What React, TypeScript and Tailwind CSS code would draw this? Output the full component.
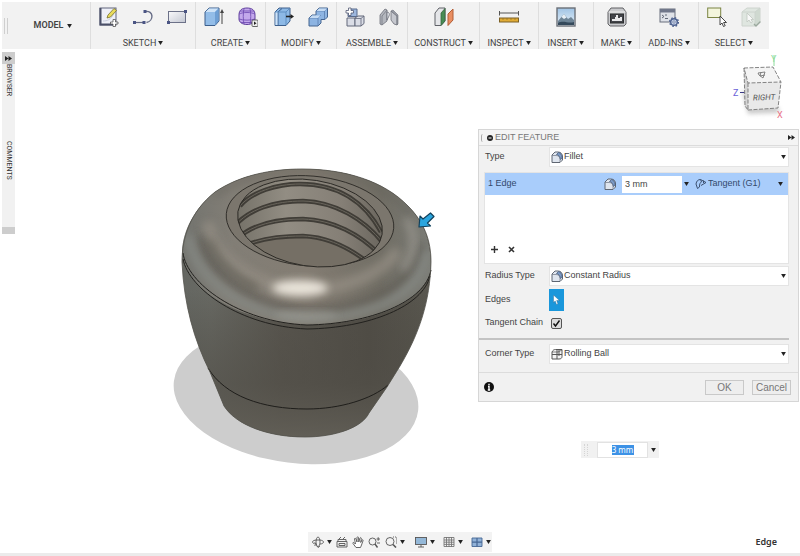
import React, { ReactNode } from "react";

const uiFont = "font-['Roboto','Liberation_Sans',Arial,sans-serif]";

function Caret({ small = false }: { small?: boolean }) {
  return (
    <svg
      viewBox="0 0 6 5"
      className={small ? "h-1 w-[5px] shrink-0" : "h-[5px] w-1.5 shrink-0"}
      aria-hidden="true"
    >
      <path d="M0 0H6L3 5Z" fill="#222" />
    </svg>
  );
}

function Icon({ children }: { children: ReactNode }) {
  return (
    <svg viewBox="0 0 20 20" className="size-5" fill="none" aria-hidden="true">
      {children}
    </svg>
  );
}

/* ---------- toolbar icons ---------- */

const SketchIcon = () => (
  <Icon>
    <rect x="1" y="1" width="16" height="17" fill="#eef0f8" stroke="#60657c" />
    <path d="M1.500 1V17.500H17" stroke="#4b5068" strokeWidth="2" />
    <path d="M4 14C8 14 12 13 15 6" stroke="#c9cede" />
    <path d="M8 11L9 8L15 1.500L17.500 3.500L11.500 10Z" fill="#e9dc5a" stroke="#77702f" strokeWidth=".8" />
    <path d="M14 12.500H16.500V15H19V17H16.500V19.500H14V17H11.500V15H14Z" fill="#fff" stroke="#555" strokeWidth=".8" />
  </Icon>
);
const LineIcon = () => (
  <Icon>
    <path d="M1.500 15.500H11" stroke="#666c86" strokeWidth="1.200" />
    <path d="M12 4.500C21 3 21 14 13.500 15.500" stroke="#666c86" strokeWidth="1.400" />
    <rect x="0" y="14" width="3" height="3" fill="#4b5584" />
    <rect x="9.500" y="14" width="3" height="3" fill="#4b5584" />
    <rect x="10.500" y="3" width="3" height="3" fill="#4b5584" />
  </Icon>
);
const RectIcon = () => (
  <Icon>
    <defs>
      <linearGradient id="rectFill" x1="0" y1="0" x2="1" y2="1">
        <stop offset="0" stopColor="#fafafc" />
        <stop offset="1" stopColor="#c3c7d2" />
      </linearGradient>
    </defs>
    <rect x="1.500" y="4.500" width="17" height="11" fill="url(#rectFill)" stroke="#6c7188" />
    <rect x="17" y="3" width="3" height="3" fill="#4b5584" />
    <rect x="0" y="14" width="3" height="3" fill="#4b5584" />
  </Icon>
);
const ExtrudeIcon = () => (
  <Icon>
    <path d="M1 5L5 1H15V14L11 18.500H1Z" fill="#93bde8" stroke="#3c5f8c" strokeLinejoin="round" />
    <path d="M1.500 5L5 1.500H14.500L11 5Z" fill="#cfe3f7" />
    <path d="M11 5L14.500 1.500V14L11 18Z" fill="#6e9fd4" />
    <path d="M18 17V4" stroke="#444" />
    <path d="M16 6L18 2L20 6Z" fill="#444" />
  </Icon>
);
const FormIcon = () => (
  <Icon>
    <path d="M1 8C1 3 4 1 9 1S17 3 17 8V12C17 15 14 17.500 9 17.500S1 15 1 12Z" fill="#c3a8ec" stroke="#60409c" />
    <path d="M1 7C5 5 13 5 17 7M1 12C5 13.500 13 13.500 17 12M6 1.500C5 6 5 13 6 17M12 1.500C13 6 13 13 12 17M2 4H16M3 15.500H15" stroke="#6b46b0" strokeWidth=".8" />
    <rect x="14" y="13" width="6" height="6.500" rx="1" fill="#eee" stroke="#444" strokeWidth=".8" />
    <path d="M16 14.500L18.500 16.200L16 18Z" fill="#222" />
  </Icon>
);
const PressPullIcon = () => (
  <Icon>
    <path d="M1 5L5 1H16V14L12 18.500H1Z" fill="#8db9e6" stroke="#3c5f8c" strokeLinejoin="round" />
    <path d="M4 18V5L8 1.500" stroke="#3c5f8c" />
    <path d="M12 18V5L15.500 1.500M1 5H12" stroke="#5f8fc2" />
    <path d="M1.500 5.500H3.500V18H1.500Z" fill="#cfe3f7" />
    <path d="M12 9.500H17" stroke="#222" strokeWidth="1.600" />
    <path d="M16.500 7L20 9.500L16.500 12Z" fill="#222" />
  </Icon>
);
const CombineIcon = () => (
  <Icon>
    <path d="M8 4L11 1H19.500V10L17 12.500H13V16L10 19H1V11L4 8H8Z" fill="#8db4e2" stroke="#45648f" strokeLinejoin="round" />
    <path d="M8 4H16.500V12.500M16.500 4L19.500 1M1 11H10V19M10 11L13 8" stroke="#5a7fb0" strokeWidth=".8" />
    <path d="M8.500 4L11 1.500H19L16.500 4ZM1.500 11L4 8.500H12.500L10 11Z" fill="#c5dbf3" />
  </Icon>
);
const ComponentIcon = () => (
  <Icon>
    <path d="M3 4.500L6 2H12V9.500H3Z" fill="#9db7de" stroke="#586a8c" />
    <path d="M2 11H10V19H2Z" fill="#dadde6" stroke="#63687a" />
    <path d="M10 11L13 9H19V16.500L16 19H10Z" fill="#dadde6" stroke="#63687a" />
    <path d="M10 11.500H16V19M16 11.500L19 9" stroke="#63687a" strokeWidth=".8" />
    <path d="M3.500 1H6V3.500H8.500V6H6V8.500H3.500V6H1V3.500H3.500Z" fill="#fff" stroke="#545b73" strokeWidth=".8" />
  </Icon>
);
const JointIcon = () => (
  <Icon>
    <path d="M1 8L6 2L8 3V14L3 18L1 17Z" fill="#b4b7be" stroke="#6c6f78" strokeWidth=".8" />
    <path d="M8 5C10 5 11 7 10 9L8 13Z" fill="#e2e4e9" stroke="#6c6f78" strokeWidth=".8" />
    <path d="M12 4L18 9V18L15 17L12 13Z" fill="#c6c8cf" stroke="#6c6f78" strokeWidth=".8" />
    <path d="M12 4L14 3L19 8V17L18 18V9Z" fill="#9a9da6" stroke="#6c6f78" strokeWidth=".6" />
    <path d="M3 18V9L8 3" stroke="#777a83" strokeWidth=".8" />
  </Icon>
);
const PlaneIcon = () => (
  <Icon>
    <path d="M1 6L5 1H11V14L7 18.500H1Z" fill="#e5e6e9" stroke="#606268" strokeLinejoin="round" />
    <path d="M7 6L11 1.500V14L7 18.500Z" fill="#478c54" stroke="#39663f" strokeWidth=".8" />
    <path d="M14 7L19 2V13L14 18.500Z" fill="#ea8f62" stroke="#b25c34" />
  </Icon>
);
const MeasureIcon = () => (
  <Icon>
    <path d="M1 6H19M.500 4V8.500M19.500 4V8.500" stroke="#555" />
    <rect x=".500" y="11" width="19" height="4" fill="#e0ab36" stroke="#7c6126" />
    <path d="M4 11V13M8 11V13M12 11V13M16 11V13" stroke="#8b6b24" strokeWidth=".6" />
  </Icon>
);
const ImageIcon = () => (
  <Icon>
    <defs>
      <linearGradient id="sky" x1="0" y1="0" x2="0" y2="1">
        <stop offset="0" stopColor="#9fc3e4" />
        <stop offset="1" stopColor="#eaf3fa" />
      </linearGradient>
    </defs>
    <rect x="1" y="1" width="18" height="18" fill="url(#sky)" stroke="#6b7077" strokeWidth="1.400" />
    <path d="M2 14L8 7L12 12L15 10L18 13V18H2Z" fill="#6d8496" />
    <path d="M5.500 10L8 7L10.500 10.500L8 12Z" fill="#e7eff5" />
    <path d="M2 16C8 13 12 17 18 15V18H2Z" fill="#34495b" />
  </Icon>
);
const PrintIcon = () => (
  <Icon>
    <path d="M1 5L4 1H16L19 5V17L17 19H3L1 17Z" fill="#c9cacd" stroke="#606164" />
    <path d="M1.500 5H18.500" stroke="#eee" />
    <rect x="3.500" y="7" width="13" height="9" fill="#424449" stroke="#2d2e31" />
    <path d="M5 14V12H8V10H9V8H11V11H13V10H15V14Z" fill="#e8e8ea" />
  </Icon>
);
const ScriptIcon = () => (
  <Icon>
    <rect x="1" y="2" width="15" height="13" fill="#dfe2e8" stroke="#696e7c" />
    <path d="M1 2H16V5.500H1Z" fill="#70778a" />
    <path d="M3 8L5 9.500L3 11M6 11.500H9M6 8H8" stroke="#555b6b" strokeWidth=".9" />
    <circle cx="15" cy="15" r="3.300" fill="#c7d2e8" stroke="#4d618f" strokeWidth="1.400" />
    <circle cx="15" cy="15" r="4.400" stroke="#4d618f" strokeWidth="1.300" strokeDasharray="1.700 1.750" />
    <circle cx="15" cy="15" r="1.200" fill="#fff" stroke="#4d618f" strokeWidth=".7" />
  </Icon>
);
const SelectIcon = () => (
  <Icon>
    <rect x=".700" y="1" width="13" height="9.500" fill="#f3f5dc" stroke="#7b8443" />
    <path d="M13 9V18L15 16L16.500 19.500L18.200 18.700L16.600 15.500H19.500Z" fill="#fff" stroke="#333" strokeWidth=".9" />
  </Icon>
);
const SelectBodyIcon = () => (
  <Icon>
    <g opacity=".6">
      <path d="M1 5L6 1H19V14L14 19H1Z" fill="#d3dfd5" stroke="#b4c0b6" />
      <path d="M14 5L19 1V14L14 19Z" fill="#b8c9bb" />
      <path d="M1 5H14V19M14 5L19 1" stroke="#b4c0b6" />
      <path d="M6 6V15L8 13L10 16L11.500 15L10 12.500H12.500Z" fill="#fff" stroke="#9fab9f" strokeWidth=".8" />
      <path d="M13 17L15 19L19.500 14.500" stroke="#627a67" strokeWidth="1.400" />
    </g>
  </Icon>
);

const groups: { name: string; icons: (() => ReactNode)[] }[] = [
  { name: "SKETCH", icons: [SketchIcon, LineIcon, RectIcon] },
  { name: "CREATE", icons: [ExtrudeIcon, FormIcon] },
  { name: "MODIFY", icons: [PressPullIcon, CombineIcon] },
  { name: "ASSEMBLE", icons: [ComponentIcon, JointIcon] },
  { name: "CONSTRUCT", icons: [PlaneIcon] },
  { name: "INSPECT", icons: [MeasureIcon] },
  { name: "INSERT", icons: [ImageIcon] },
  { name: "MAKE", icons: [PrintIcon] },
  { name: "ADD-INS", icons: [ScriptIcon] },
  { name: "SELECT", icons: [SelectIcon, SelectBodyIcon] },
];

function Toolbar() {
  return (
    <header className="mt-0.5 mr-[31px] ml-0.5 grid h-[47px] grid-cols-[88fr_105fr_70fr_71fr_71fr_72fr_59fr_55fr_46fr_59fr_71fr] bg-[#f2f2f2]">
      <div className="flex items-center">
        <span className="ml-0.5 h-4 w-1 border-x border-[#cfcfcf]" />
        <button className="flex flex-1 items-center justify-center gap-1 pl-2 text-[9px] font-semibold text-[#444]">
          MODEL <Caret small />
        </button>
      </div>
      {groups.map((g) => (
        <section
          key={g.name}
          className="flex min-w-0 flex-col items-center justify-between border-l border-[#dedede] pt-[5px]"
        >
          <div className="flex gap-3.5">
            {g.icons.map((I, i) => (
              <button key={i} aria-label={`${g.name} ${i + 1}`}>
                <I />
              </button>
            ))}
          </div>
          <button className="flex items-center gap-0.5 text-[9px] leading-3 whitespace-nowrap text-[#444]">
            {g.name} <Caret small />
          </button>
        </section>
      ))}
    </header>
  );
}

function SidePanels() {
  return (
    <aside className="mt-[3px] ml-0.5 flex h-[182px] w-[13px] flex-col items-center bg-[#f1f1f1] text-[7px] leading-[13px] text-[#333]">
      <button className="flex h-3 w-full items-center justify-center bg-[#cdcdcd]" aria-label="Expand">
        <DoubleArrow />
      </button>
      <button className="h-[77px] text-left [writing-mode:vertical-rl]">BROWSER</button>
      <button className="text-left [writing-mode:vertical-rl]">COMMENTS</button>
      <span className="mt-auto h-[7px] w-full bg-[#cdcdcd]" />
    </aside>
  );
}

function DoubleArrow() {
  return (
    <svg viewBox="0 0 7 5" className="h-[5px] w-[7px]" aria-hidden="true">
      <path d="M0 0L3.500 2.500L0 5ZM3.500 0L7 2.500L3.500 5Z" fill="#222" />
    </svg>
  );
}

/* ---------- modelled part ---------- */

const bodyPath =
  "M182 262C182 238 190 212 215 192C240 175 272 169 302 169C345 169 384 181 408 206C424 222 431 240 431 262C430 302 419 334 400 366L387 387L369 413C362 428 334 437 305 437C268 437 236 425 224 406L210 372C194 340 184 305 182 262Z";
const lidPath =
  "M182 254C182 236 190 212 215 192C240 175 272 169 302 169C345 169 384 181 408 206C424 222 431 240 431 270C424 304 368 325 307 325C241 322 185 290 182 254Z";

const threads = [
  "M240 206C252 192 276 184 300 184C340 184 366 204 381 232",
  "M234 227C248 209 275 201 303 201C335 202 364 219 383 243",
  "M238 238C252 225 276 219 303 219C333 220 360 234 380 255",
  "M244 246C262 238 282 236 303 236C327 237 349 247 370 264",
];

function Part() {
  return (
    <svg
      viewBox="160 150 290 330"
      className="absolute top-[101px] left-[160px] h-[330px] w-[290px]"
      fill="none"
      role="img"
      aria-label="Threaded cap"
    >
      <defs>
        <linearGradient id="body" x1="0" y1="0" x2="1" y2="0">
          <stop offset="0" stopColor="#656762" />
          <stop offset=".12" stopColor="#686963" />
          <stop offset=".4" stopColor="#5a5750" />
          <stop offset=".75" stopColor="#514e47" />
          <stop offset="1" stopColor="#5a5850" />
        </linearGradient>
        <linearGradient id="bodyShade" x1="0" y1="0" x2="0" y2="1">
          <stop offset=".45" stopColor="#45423c" stopOpacity="0" />
          <stop offset=".8" stopColor="#504d46" stopOpacity=".6" />
          <stop offset="1" stopColor="#625f57" stopOpacity=".9" />
        </linearGradient>
        <linearGradient id="lid" x1="0" y1="0" x2="1" y2="0">
          <stop offset="0" stopColor="#72736e" />
          <stop offset=".2" stopColor="#827e76" />
          <stop offset=".5" stopColor="#847d73" />
          <stop offset=".8" stopColor="#716e65" />
          <stop offset="1" stopColor="#7b7c76" />
        </linearGradient>
        <linearGradient id="wall" x1="0" y1="0" x2="1" y2="0">
          <stop offset="0" stopColor="#716e65" />
          <stop offset=".35" stopColor="#928d83" />
          <stop offset=".7" stopColor="#857f76" />
          <stop offset="1" stopColor="#66625a" />
        </linearGradient>
        <filter id="soft4" x="-50%" y="-50%" width="200%" height="200%">
          <feGaussianBlur stdDeviation="4" />
        </filter>
        <clipPath id="lidClip">
          <path d={lidPath} />
        </clipPath>
        <clipPath id="boreClip">
          <ellipse cx="310" cy="223" rx="73" ry="43" transform="rotate(9 310 223)" />
        </clipPath>
      </defs>

      <ellipse cx="296" cy="396" rx="123" ry="67" transform="rotate(7 296 396)" fill="#cdcdcd" />
      <path d={bodyPath} fill="url(#body)" />
      <path d={bodyPath} fill="url(#bodyShade)" />
      <path d={lidPath} fill="url(#lid)" />
      <g clipPath="url(#lidClip)">
        <path d="M202 235C205 272 250 308 310 311C370 309 415 285 422 245" stroke="#5e5c55" strokeWidth="8" opacity=".8" filter="url(#soft4)" />
        <path d="M188 235C192 275 240 314 307 319C370 317 422 298 427 250" stroke="#858883" strokeWidth="8" filter="url(#soft4)" />
        <path d="M208 222C212 258 255 288 305 290C345 289 380 276 398 250" stroke="#9a9388" strokeWidth="12" opacity=".65" filter="url(#soft4)" />
        <path d="M209 240C218 264 236 278 258 288" stroke="#55524a" strokeWidth="8" opacity=".5" filter="url(#soft4)" />
        <ellipse cx="300" cy="288" rx="28" ry="8" fill="#fffaf0" opacity=".8" filter="url(#soft4)" />
        <path d="M406 218C417 234 416 254 402 270" stroke="#a09d95" strokeWidth="7" opacity=".7" filter="url(#soft4)" />
        <path d="M215 195C245 173 290 168 330 172C370 178 398 197 412 216" stroke="#5d5b54" strokeWidth="5" opacity=".5" filter="url(#soft4)" />
        <ellipse cx="306" cy="315" rx="32" ry="4" fill="#a5a69f" opacity=".6" filter="url(#soft4)" />
      </g>

      <ellipse cx="310" cy="221" rx="84" ry="45" transform="rotate(5 310 221)" fill="#7b766d" stroke="#2c2a26" strokeWidth=".9" />
      <g clipPath="url(#boreClip)">
        <rect x="230" y="170" width="160" height="105" fill="url(#wall)" />
        <path d="M246 247C262 239 282 237 303 237C327 238 349 248 366 262L355 275H250Z" fill="#756f65" />
        {threads.map((d) => (
          <g key={d}>
            <path d={d} stroke="#403d37" strokeWidth="4.500" />
            <path d={d} stroke="#6a665d" strokeWidth="1" />
          </g>
        ))}
      </g>
      <ellipse cx="310" cy="223" rx="73" ry="43" transform="rotate(9 310 223)" stroke="#292722" strokeWidth=".9" />
      <path d="M183 253C187 283 238 322 307 325C370 324 425 302 431 270" stroke="#22211e" strokeWidth="1" />
      <path d="M183 259C189 289 240 326 307 329C370 328 423 306 430 276" stroke="#22211e" strokeWidth="1" />
      <path d="M208 368C225 396 262 409 307 409C340 409 372 399 388 385" stroke="#1f1e1b" strokeWidth="1" />
      <path d={bodyPath} stroke="#54534d" strokeWidth=".8" />

      <path d="M419 227L420 216L423 219L430.500 213L434 216.500L427.500 223L430.500 226Z" fill="#2ba5de" stroke="#12415c" strokeWidth="1.200" strokeLinejoin="round" />
    </svg>
  );
}

function ViewCube() {
  return (
    <svg
      viewBox="725 50 70 75"
      className="absolute top-px right-[5px] h-[75px] w-[70px]"
      role="img"
      aria-label="View cube"
    >
      <defs>
        <filter id="cubeShadow" x="-20%" y="-20%" width="140%" height="150%">
          <feGaussianBlur stdDeviation="2" />
        </filter>
      </defs>
      <path d="M742 90L748 114L779 113V108Z" fill="#999" opacity=".5" filter="url(#cubeShadow)" />
      <path d="M774 66V55" stroke="#8fdc9c" />
      <path d="M740 92.500H745" stroke="#3b3b86" />
      <path d="M744 68L773 67L781 82L748 83Z" fill="#f4f4f4" />
      <path d="M744 68L748 83V111L745 106Z" fill="#d4d4d4" />
      <path d="M748 83L781 82L778 108L748 110Z" fill="#e9e9e9" />
      <path d="M744 68L773 67L781 82L748 83ZM744 68L745 106L748 110V83M748 110L778 108L781 82" fill="none" stroke="#777" strokeWidth=".9" strokeDasharray="4 1.500" />
      <path d="M758 73L765 72L763 78L759 75ZM761 72L760 76L765 75" fill="none" stroke="#777" strokeWidth=".9" />
      <text x="753" y="100" fontSize="8" fontStyle="italic" fill="#555" transform="rotate(-2 764 97)">RIGHT</text>
      <text x="733" y="96" fontSize="9" fill="#6a62d8">Z</text>
      <text x="777" y="118" fontSize="9" fill="#ea6f86">X</text>
      <text x="771" y="62" fontSize="9" fill="#8fdc9c">Y</text>
    </svg>
  );
}

/* ---------- dialog ---------- */

function FilletIcon() {
  return (
    <svg viewBox="0 0 12 12" className="size-3" fill="none" aria-hidden="true">
      <path d="M1 4L4 1H7C10 1 11.500 3 11.500 6V9L9 11.500H1Z" fill="#dfe5ee" stroke="#5f6672" />
      <path d="M1 4.500H5C7.500 4.500 9 6 9 8.500V11" stroke="#7b828e" strokeWidth=".8" />
      <path d="M5.500 3.500C8 4 9 6 9.500 8.500L11.200 7C11 3.500 9.500 2 7.500 1.500Z" fill="#7c9bc6" stroke="#3e5376" strokeWidth=".7" />
    </svg>
  );
}
function TangentIcon() {
  return (
    <svg viewBox="0 0 12 12" className="size-3" fill="none" aria-hidden="true">
      <path d="M1 6C1.500 3 3 1.500 5.500 1.500L6.500 4C5 4.500 4.500 6 4.500 9L2.500 10.500Z" stroke="#3b5070" />
      <path d="M5.500 1.500L11 4.500L6 7.500M8.500 2.500V5" stroke="#3b5070" />
    </svg>
  );
}
function RollingIcon() {
  return (
    <svg viewBox="0 0 12 12" className="size-3" fill="none" stroke="#555" aria-hidden="true">
      <path d="M1 4C2 2 3 1.500 4.500 1.500H11V8.500C11 10 10 11 8 11H1Z" fill="#f4f4f4" />
      <path d="M1 6.500H11M6 2V11M8 1.500V8" />
      <path d="M1 4H7L11 2" strokeWidth=".7" />
    </svg>
  );
}

function Row({
  id,
  label,
  className,
  children,
}: {
  id: string;
  label: string;
  className: string;
  children: ReactNode;
}) {
  return (
    <div className={`flex items-center ${className}`}>
      <label htmlFor={id} className="w-16 shrink-0 whitespace-nowrap">
        {label}
      </label>
      {children}
    </div>
  );
}

function Choice({ id, value, icon }: { id: string; value: string; icon: ReactNode }) {
  return (
    <div className="grid h-full flex-1 grid-cols-[1fr] items-center border border-[#e4e4e4] bg-white *:col-start-1 *:row-start-1">
      <select id={id} className="h-full w-full appearance-none bg-transparent pl-3.5">
        <option>{value}</option>
      </select>
      <span className="pointer-events-none ml-px justify-self-start">{icon}</span>
      <span className="pointer-events-none mr-0.5 justify-self-end">
        <Caret small />
      </span>
    </div>
  );
}

function EditFeature() {
  return (
    <section
      aria-label="Edit feature"
      className="absolute top-20 right-px w-[321px] border border-[#d6d6d6] bg-[#f1f1f1] font-['Liberation_Sans',Arial,sans-serif] text-[9px] text-[#444]"
    >
      <header className="flex h-4 items-center border-b border-[#dcdcdc] bg-[#f4f4f4] text-[#777]">
        <span className="mr-1 ml-0.5 h-2 w-0.5 rounded-l border-l border-[#aaa]" />
        <svg viewBox="0 0 6 6" className="size-1.5" aria-hidden="true">
          <circle cx="3" cy="3" r="3" fill="#222" />
          <path d="M1.500 3H4.500" stroke="#fff" />
        </svg>
        <h2 className="ml-0.5">EDIT FEATURE</h2>
        <button className="mr-[3px] ml-auto" aria-label="Collapse">
          <DoubleArrow />
        </button>
      </header>

      <div className="pt-px pr-[9px] pl-1.5">
        <Row id="type" label="Type" className="h-5">
          <Choice id="type" value="Fillet" icon={<FilletIcon />} />
        </Row>

        <div className="-ml-px mt-[5px] flex h-[92px] flex-col border border-[#e4e4e4] bg-white">
          <div className="flex h-[22px] items-center bg-[#a9cdfb] pl-[3px] text-[#33496b]">
            <span>1 Edge</span>
            <span className="mr-1.5 ml-auto">
              <FilletIcon />
            </span>
            <input
              aria-label="Radius"
              defaultValue="3 mm"
              className="h-[17px] w-[60px] bg-white pl-[3px] text-[#444]"
            />
            <span className="ml-0.5">
              <Caret small />
            </span>
            <span className="ml-1.5">
              <TangentIcon />
            </span>
            <select aria-label="Continuity" className="w-[71px] appearance-none pl-px">
              <option>Tangent (G1)</option>
            </select>
            <span className="mr-[5px]">
              <Caret small />
            </span>
          </div>
          <div className="mt-auto mb-2.5 flex gap-2.5 pl-1.5">
            <button aria-label="Add">
              <svg viewBox="0 0 7 7" className="size-[7px]" stroke="#333" strokeWidth="1.400" aria-hidden="true">
                <path d="M3.500 0V7M0 3.500H7" />
              </svg>
            </button>
            <button aria-label="Remove">
              <svg viewBox="0 0 7 7" className="size-[7px]" stroke="#333" strokeWidth="1.600" aria-hidden="true">
                <path d="M1 1L6 6M6 1L1 6" />
              </svg>
            </button>
          </div>
        </div>

        <Row id="radius" label="Radius Type" className="mt-0.5 h-5">
          <Choice id="radius" value="Constant Radius" icon={<FilletIcon />} />
        </Row>
        <Row id="edges" label="Edges" className="mt-[3px] h-[22px]">
          <button id="edges" className="flex h-[22px] w-[15px] items-center justify-center bg-[#1a97db]">
            <svg viewBox="0 0 7 10" className="h-2.5 w-[7px]" aria-hidden="true">
              <path d="M.500 0V7.500L2.200 6L3.500 9.500L5 9L3.700 5.500H6.500Z" fill="#fff" stroke="#24618c" strokeWidth=".4" />
            </svg>
          </button>
        </Row>
        <Row id="chain" label="Tangent Chain" className="mt-1.5 h-3">
          <span className="ml-0.5 grid size-[11px] *:col-start-1 *:row-start-1">
            <input
              id="chain"
              type="checkbox"
              defaultChecked
              className="size-[11px] appearance-none rounded-[2px] border border-[#555] bg-[#ddd]"
            />
            <svg viewBox="0 0 11 11" className="pointer-events-none size-[11px]" fill="none" aria-hidden="true">
              <path d="M2.500 5.500L4.500 8L8.500 2.500" stroke="#111" strokeWidth="1.400" />
            </svg>
          </span>
        </Row>
        <hr className="-ml-1.5 mt-[9px] h-0.5 border-0 bg-[#c3c3c3]" />
        <Row id="corner" label="Corner Type" className="mt-1 h-5">
          <Choice id="corner" value="Rolling Ball" icon={<RollingIcon />} />
        </Row>
      </div>

      <footer className="mt-2 flex h-[29px] items-center gap-2 border-t border-[#dcdcdc] pr-[7px] pl-[5px]">
        <button className="mr-auto" aria-label="Information">
          <svg viewBox="0 0 10 10" className="size-2.5" aria-hidden="true">
            <circle cx="5" cy="5" r="5" fill="#111" />
            <path d="M5 1.700V3.200M4 4.500H5V7.500M3.800 8H6.200" stroke="#fff" strokeWidth="1.400" />
          </svg>
        </button>
        <button className="h-[15px] w-[39px] border border-[#c9c9c9] bg-[#eee] text-[10px] leading-[13px] text-[#777]">
          OK
        </button>
        <button className="h-[15px] w-[39px] border border-[#c9c9c9] bg-[#eee] text-[10px] leading-[13px] text-[#777]">
          Cancel
        </button>
      </footer>
    </section>
  );
}

function RadiusField() {
  return (
    <div className="absolute top-[392px] left-[581px] flex h-[17px] w-[78px] items-center bg-[#f1f1f1] px-px">
      <span className="ml-0.5 h-3 w-1 border-x border-dotted border-[#d5d5d5]" />
      <span className="ml-[9px] flex h-4 w-[51px] items-center justify-center border border-[#e2e2e2] bg-white">
        <input
          aria-label="Fillet radius"
          defaultValue="3 mm"
          className="h-2.5 w-[22px] bg-[#3d92e6] text-center font-['Noto_Sans',sans-serif] text-[8px] text-white"
        />
      </span>
      <span className="ml-[3px]">
        <Caret small />
      </span>
    </div>
  );
}

/* ---------- navigation bar ---------- */

function NavIcon({ children }: { children: ReactNode }) {
  return (
    <svg viewBox="0 0 12 12" className="size-3" fill="none" stroke="#555" strokeWidth=".9" aria-hidden="true">
      {children}
    </svg>
  );
}

const navItems: { name: string; menu?: boolean; gap: string; icon: ReactNode }[] = [
  {
    name: "Orbit",
    menu: true,
    gap: "",
    icon: (
      <NavIcon>
        <path d="M4 8C2 8 .500 7 .500 6S2 4 5 4H8M8 4C10 4.300 11.500 5 11.500 6S10 8 8 8" />
        <path d="M4 6C4 3 5 1 6 1S8 3 8 6S7 10.500 6 10.500S4 9 4 6" />
        <path d="M4.500 9.500L6 11.500L8 10M2.500 6.500L4.500 8L2.500 10" />
      </NavIcon>
    ),
  },
  {
    name: "Look at",
    gap: "ml-1",
    icon: (
      <NavIcon>
        <path d="M1 5.500H11V11H1ZM2 5V3.500H10V5M3 3L5 1M7 3L9 1" />
        <path d="M3 7.500H9V9.500H3Z" />
      </NavIcon>
    ),
  },
  {
    name: "Pan",
    gap: "ml-1",
    icon: (
      <NavIcon>
        <path d="M4 11.500L1 7.500C.500 6.500 1.500 6 2.500 7L3.500 8L2.500 3C2.500 2 3.500 2 4 3L5 6L5 1.500C5.200 .600 6.300 .600 6.500 1.500L6.800 6L8 2C8.500 1.300 9.400 1.600 9.300 2.500L8.700 6.500L10 4C10.600 3.400 11.400 4 11 4.800L9.500 9L8.500 11.500Z" fill="#fff" />
      </NavIcon>
    ),
  },
  {
    name: "Zoom",
    gap: "ml-1",
    icon: (
      <NavIcon>
        <circle cx="4.500" cy="5.500" r="3.500" />
        <path d="M7 8L9.500 11.500" strokeWidth="1.400" />
        <path d="M8.500 3H12M10.200 1.200V4.800M9 7H12" />
      </NavIcon>
    ),
  },
  {
    name: "Zoom window",
    menu: true,
    gap: "ml-[5px]",
    icon: (
      <NavIcon>
        <circle cx="5" cy="5.500" r="4" />
        <path d="M8 8.500L11 11.500" strokeWidth="1.600" />
        <path d="M8 1H11.500V8" strokeDasharray="1 1" />
      </NavIcon>
    ),
  },
  {
    name: "Display",
    menu: true,
    gap: "ml-2.5",
    icon: (
      <NavIcon>
        <rect x=".500" y="1.500" width="11" height="7" fill="#94b8d8" />
        <path d="M6 9V11M3 11H9" />
      </NavIcon>
    ),
  },
  {
    name: "Grid",
    menu: true,
    gap: "ml-2",
    icon: (
      <NavIcon>
        <path d="M1 1.500H11V10.500H1ZM3.500 1V11M6 1V11M8.500 1V11M1 4H11M1 6.200H11M1 8.400H11" stroke="#777" />
      </NavIcon>
    ),
  },
  {
    name: "Viewports",
    menu: true,
    gap: "ml-2",
    icon: (
      <NavIcon>
        <path d="M1 2H11V10.500H1Z" fill="#91b2d8" stroke="#466794" />
        <path d="M6 2V10.500M1 6.200H11" stroke="#466794" strokeWidth="1.200" />
      </NavIcon>
    ),
  },
];

function StatusBar() {
  return (
    <footer className="mt-auto">
      <div className="grid grid-cols-[1fr_184px_1fr] items-center pb-px">
        <nav
          aria-label="Navigation"
          className="col-start-2 flex h-5 items-center bg-[#f3f3f3] pl-1"
        >
          {navItems.map((n) => (
            <button key={n.name} aria-label={n.name} className={`flex items-center gap-[3px] ${n.gap}`}>
              {n.icon}
              {n.menu && <Caret small />}
            </button>
          ))}
        </nav>
        <p className="pr-[23px] text-right font-['Noto_Sans',sans-serif] text-[9px] font-semibold text-[#333]">
          Edge
        </p>
      </div>
      <div className="h-[3px] bg-[#ebebeb]" />
    </footer>
  );
}

export default function App() {
  return (
    <div className={`flex min-h-screen flex-col overflow-hidden bg-white ${uiFont}`}>
      <Toolbar />
      <main className="relative flex-1">
        <SidePanels />
        <Part />
        <ViewCube />
        <EditFeature />
        <RadiusField />
      </main>
      <StatusBar />
    </div>
  );
}
